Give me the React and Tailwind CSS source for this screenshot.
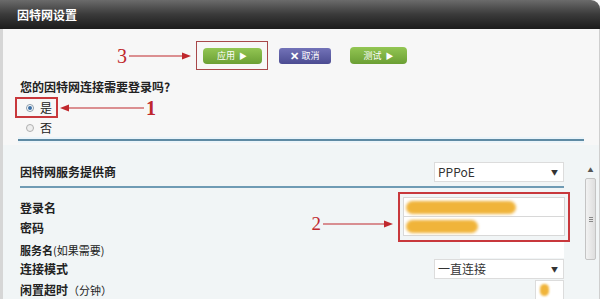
// App.jsx
// Router "Internet settings" panel with red tutorial annotations (1, 2, 3)

const cjk = { fontFamily: '"Noto Sans CJK SC", "Noto Sans", sans-serif' };

function Arrow({ width, left = false }) {
  // thin red line with a filled arrow head
  return (
    <svg width={width} height="8" viewBox={`0 0 ${width} 8`} className="block">
      {left ? (
        <>
          <line x1="7" y1="4" x2={width} y2="4" stroke="#c0282d" strokeWidth="1.2" />
          <polygon points="0,4 9,0.5 9,7.5" fill="#c0282d" />
        </>
      ) : (
        <>
          <line x1="0" y1="4" x2={width - 7} y2="4" stroke="#c0282d" strokeWidth="1.2" />
          <polygon points={`${width},4 ${width - 9},0.5 ${width - 9},7.5`} fill="#c0282d" />
        </>
      )}
    </svg>
  );
}

function Blob({ w }) {
  return <div className="h-[13px] rounded-full bg-[#f0b43a] blur-[1.5px]" style={{ width: w }} />;
}

function Select({ value }) {
  return (
    <div className="w-[130px] h-[20px] bg-white border border-[#dcdcdc] flex items-center justify-between pl-[3px] pr-[5px]">
      <span className="text-[12px] text-[#333]">{value}</span>
      <span className="text-[7px] text-[#333]">▼</span>
    </div>
  );
}

function Label({ children }) {
  return <div className="text-[12px] font-bold text-[#222]">{children}</div>;
}

export default function App() {
  return (
    <div className="w-[600px] h-[299px] overflow-hidden bg-[#f7f7f7] flex flex-col" style={cjk}>

      {/* Dark title bar */}
      <div className="h-[29px] shrink-0 rounded-tr-[9px] bg-gradient-to-b from-[#6b6b6b] via-[#3a3a3a] to-[#1c1c1c] flex items-center pl-[17px]">
        <span className="text-white text-[12px] font-bold">因特网设置</span>
      </div>

      <div className="flex-1 border-l-[3px] border-[#d6d6d6] border-r border-r-[#cfcfcf] flex flex-col">

        {/* Upper part: buttons + login question */}
        <div className="h-[116px] shrink-0 bg-[#f7f7f7] flex flex-col">
          <div className="h-[53px] flex items-center pl-[114px] pt-[2px]">
            <span className="text-[20px] text-[#c0282d] leading-none mr-[2px]" style={{ fontFamily: '"Liberation Serif", serif' }}>3</span>
            <Arrow width={62} />
            <div className="ml-[5px] border border-[#a8484a] w-[72px] h-[29px] flex items-center justify-center">
              <div className="w-[59px] h-[16px] rounded-[4px] bg-gradient-to-b from-[#93c653] to-[#6b9f34] text-white text-[9px] flex items-center justify-center gap-[4px]">
                应用<span className="text-[8px]">▶</span>
              </div>
            </div>
            <div className="ml-[11px] w-[52px] h-[16px] rounded-[3px] bg-gradient-to-b from-[#7373b8] to-[#4c4c92] text-white text-[9px] flex items-center justify-center">
              <span className="text-[11px] font-bold mr-[2px]">✕</span>取消
            </div>
            <div className="ml-[19px] w-[57px] h-[17px] rounded-[4px] bg-gradient-to-b from-[#93c653] to-[#6b9f34] text-white text-[9px] flex items-center justify-center gap-[4px]">
              测试<span className="text-[8px]">▶</span>
            </div>
          </div>

          <div className="pl-[17px] text-[12px] font-bold text-[#222] leading-[14px]">您的因特网连接需要登录吗?</div>

          <div className="flex items-center mt-[3px] ml-[12px]">
            <div className="w-[43px] h-[21px] border-2 border-[#c8383c] flex items-center pl-[9px] gap-[6px]">
              <span className="w-[8px] h-[8px] rounded-full border border-[#8a9aa8] bg-white flex items-center justify-center">
                <span className="w-[4px] h-[4px] rounded-full bg-[#3a6ea5]" />
              </span>
              <span className="text-[12px] text-[#222]">是</span>
            </div>
            <div className="ml-[2px]"><Arrow width={84} left /></div>
            <span className="ml-[2px] text-[20px] text-[#c0282d] font-bold leading-none" style={{ fontFamily: '"Liberation Serif", serif' }}>1</span>
          </div>

          <div className="flex items-center ml-[23px] mt-[1px] gap-[6px]">
            <span className="w-[8px] h-[8px] rounded-full border border-[#b0b0b0] bg-[#eee]" />
            <span className="text-[12px] text-[#222]">否</span>
          </div>

          <div className="mt-auto mb-[2px] mx-[15px] h-[6px] bg-[#eaf4fa] flex items-center">
            <div className="w-full h-[2px] bg-[#5f8aa3]" />
          </div>
        </div>

        {/* Lower part: ISP settings with scrollbar */}
        <div className="flex-1 bg-[#f1f5f6] flex">
          <div className="w-[561px] pl-[17px] flex flex-col pt-[17px]">
            <div className="h-[20px] flex items-center justify-between">
              <Label>因特网服务提供商</Label>
              <Select value="PPPoE" />
            </div>
            <div className="h-[2px] bg-[#6f9bb4] mt-[4px]" />

            <div className="flex mt-[4px]">
              <div className="flex-1 flex flex-col pt-[7px] gap-[2px]">
                <Label>登录名</Label>
                <Label>密码</Label>
              </div>
              <div className="flex items-center mr-[5px]">
                <span className="text-[19px] text-[#c0282d] leading-none mr-[2px] mt-[12px]" style={{ fontFamily: '"Liberation Serif", serif' }}>2</span>
                <div className="mt-[14px]"><Arrow width={70} /></div>
              </div>
              <div className="w-[172px] h-[50px] border-2 border-[#c8383c] -mr-[6px] p-[3px] flex flex-col">
                <div className="h-[20px] bg-white border border-[#d8d8d8] flex items-center pl-[2px]"><Blob w={110} /></div>
                <div className="h-[19px] bg-white border border-[#d8d8d8] border-t-0 flex items-center pl-[2px]"><Blob w={72} /></div>
              </div>
            </div>

            <div className="flex items-center justify-between h-[16px]">
              <div className="text-[11px] font-bold text-[#222]">服务名<span className="font-normal">(如果需要)</span></div>
              <div className="w-[104px] h-[16px] bg-white" />
            </div>

            <div className="flex items-center justify-between h-[20px] mt-[1px]">
              <Label>连接模式</Label>
              <Select value="一直连接" />
            </div>

            <div className="flex items-center justify-between h-[20px] mt-[1px]">
              <div className="text-[12px] font-bold text-[#222]">闲置超时<span className="font-normal text-[11px]">（分钟）</span></div>
              <div className="w-[29px] h-[20px] bg-white border border-[#dcdcdc] flex items-center pl-[4px]">
                <div className="w-[9px] h-[12px] rounded-full bg-[#f0b43a] blur-[1px]" />
              </div>
            </div>
          </div>

          {/* Scrollbar */}
          <div className="ml-[21px] w-[11px] flex flex-col pt-[22px]">
            <div className="text-[6px] text-[#555] text-center leading-none">▲</div>
            <div className="mt-[5px] h-[82px] rounded-[2px] border border-[#c4c4c4] bg-gradient-to-r from-[#f2f2f2] to-[#dedede] flex flex-col items-center justify-center gap-[1px]">
              <span className="w-[4px] h-[1px] bg-[#888]" />
              <span className="w-[4px] h-[1px] bg-[#888]" />
              <span className="w-[4px] h-[1px] bg-[#888]" />
            </div>
          </div>
        </div>
      </div>
    </div>
  );
}
